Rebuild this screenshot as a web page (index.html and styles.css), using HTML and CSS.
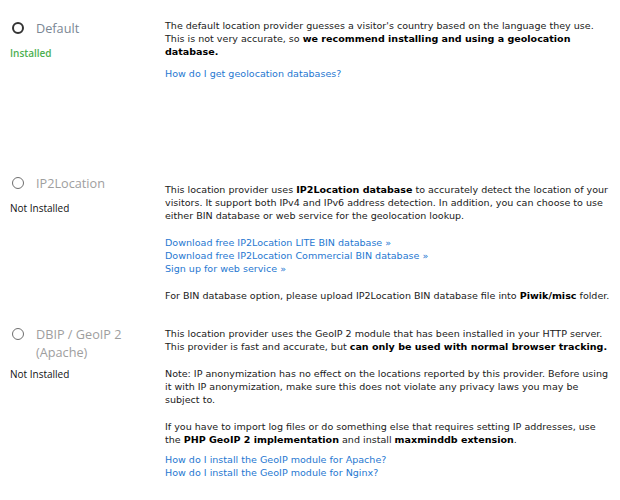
FILE: index.html
```
<!DOCTYPE html>
<html>
<head>
<meta charset="utf-8">
<link rel="stylesheet" href="styles.css">
</head>
<body>
<div class="providers">
  <div class="row row-default">
    <div class="side">
      <label class="radio active"><span class="circle"></span><span class="name">Default</span></label>
      <div class="status installed">Installed</div>
    </div>
    <div class="desc">
      <p>The default location provider guesses a visitor's country based on the language they use. This is not very accurate, so <strong>we recommend installing and using a geolocation database.</strong></p>
      <p><a href="#">How do I get geolocation databases?</a></p>
    </div>
  </div>

  <div class="row row-ip2">
    <div class="side">
      <label class="radio"><span class="circle"></span><span class="name">IP2Location</span></label>
      <div class="status">Not Installed</div>
    </div>
    <div class="desc">
      <p>This location provider uses <strong>IP2Location database</strong> to accurately detect the location of your visitors. It support both IPv4 and IPv6 address detection. In addition, you can choose to use either BIN database or web service for the geolocation lookup.</p>
      <p><a href="#">Download free IP2Location LITE BIN database »</a><br><a href="#">Download free IP2Location Commercial BIN database »</a><br><a href="#">Sign up for web service »</a></p>
      <p>For BIN database option, please upload IP2Location BIN database file into <strong>Piwik/misc</strong> folder.</p>
    </div>
  </div>

  <div class="row row-geoip">
    <div class="side">
      <label class="radio"><span class="circle"></span><span class="name">DBIP / GeoIP 2<br>(Apache)</span></label>
      <div class="status">Not Installed</div>
    </div>
    <div class="desc">
      <p>This location provider uses the GeoIP 2 module that has been installed in your HTTP server. This provider is fast and accurate, but <strong>can only be used with normal browser tracking.</strong></p>
      <p>Note: IP anonymization has no effect on the locations reported by this provider. Before using it with IP anonymization, make sure this does not violate any privacy laws you may be subject to.</p>
      <p class="tight">If you have to import log files or do something else that requires setting IP addresses, use the <strong>PHP GeoIP 2 implementation</strong> and install <strong>maxminddb extension</strong>.</p>
      <p><a href="#">How do I install the GeoIP module for Apache?</a><br><a href="#">How do I install the GeoIP module for Nginx?</a></p>
    </div>
  </div>
</div>
</body>
</html>
```
FILE: styles.css
```
html, body {
  margin: 0;
  padding: 0;
  background: #fff;
}
body {
  font-family: "DejaVu Sans", sans-serif;
  font-size: 9.55px;
  line-height: 13px;
  color: #212121;
}
.row {
  display: grid;
  grid-template-columns: 165px 445px;
}
.row-default { height: 170px; }
.row-ip2 { height: 148px; }
.side {
  padding-left: 10px;
  font-family: "Open Sans", sans-serif;
}
.row-default .side { padding-top: 19px; }
.row-ip2 .side { padding-top: 4px; }
.row-geoip .side { padding-top: 7px; }
.radio {
  display: flex;
  align-items: flex-start;
}
.circle {
  box-sizing: border-box;
  width: 12px;
  height: 12px;
  margin: 3px 0 0 2px;
  border: 1.5px solid #6e6e6e;
  border-radius: 50%;
  flex: none;
}
.active .circle {
  border: 2px solid #333;
}
.name {
  margin-left: 12px;
  font-size: 12.7px;
  line-height: 18px;
  color: #9e9e9e;
}
.active .name { color: #7b8794; }
.status {
  margin-top: 8.5px;
  font-size: 10px;
  line-height: 14px;
  color: #111;
}
.row-geoip .status { margin-top: 6px; }
.status.installed { color: #4caf50; font-weight: 600; }
.desc p {
  margin: 0 0 14px;
}
.row-default .desc { padding-top: 19px; }
.row-default .desc p { margin-bottom: 9px; }
.row-ip2 .desc { padding-top: 13px; }
.row-geoip .desc { padding-top: 9px; }
.desc p.tight { margin-bottom: 7px; }
.desc strong { font-weight: bold; color: #000; }
.desc a {
  color: #1f78d1;
  text-decoration: none;
}
```
